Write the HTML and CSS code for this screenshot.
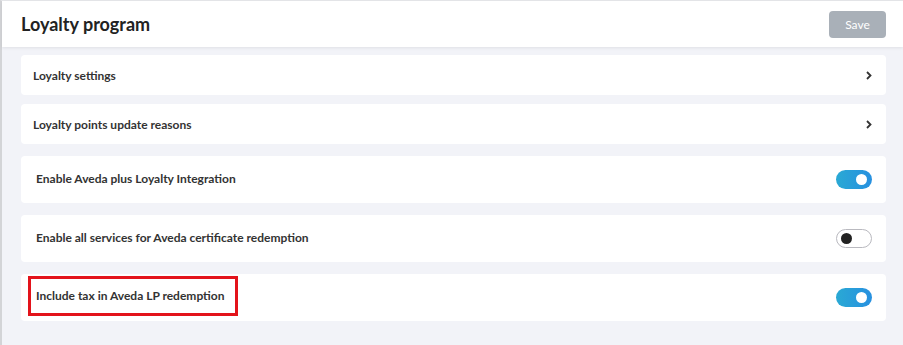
FILE: index.html
```html
<!DOCTYPE html>
<html lang="en">
<head>
    <meta charset="UTF-8">
    <meta name="viewport" content="width=device-width, initial-scale=1.0">
    <title>Loyalty program</title>
    <link rel="stylesheet" href="styles.css">
</head>
<body>
    <div class="page">
        <!-- Header -->
        <div class="header">
            <h1>Loyalty program</h1>
            <button class="save-button" disabled>Save</button>
        </div>

        <div class="content">
            <div class="card link-card">
                <span class="card-title">Loyalty settings</span>
                <svg class="chevron" width="6" height="9" viewBox="0 0 6 9"><path d="M1 1 L4.5 4.5 L1 8" fill="none" stroke="#333" stroke-width="1.8"/></svg>
            </div>
            <div class="card link-card">
                <span class="card-title">Loyalty points update reasons</span>
                <svg class="chevron" width="6" height="9" viewBox="0 0 6 9"><path d="M1 1 L4.5 4.5 L1 8" fill="none" stroke="#333" stroke-width="1.8"/></svg>
            </div>
            <div class="card toggle-card">
                <span class="card-title">Enable Aveda plus Loyalty Integration</span>
                <span class="toggle on"><span class="knob"></span></span>
            </div>
            <div class="card toggle-card">
                <span class="card-title">Enable all services for Aveda certificate redemption</span>
                <span class="toggle"><span class="knob"></span></span>
            </div>
            <div class="card toggle-card">
                <span class="card-title highlighted">Include tax in Aveda LP redemption</span>
                <span class="toggle on"><span class="knob"></span></span>
            </div>
        </div>
    </div>
</body>
</html>
```

FILE: styles.css
```css
body {
    margin: 0;
    background-color: #f2f3f8;
    font-family: Lato, "Noto Sans", sans-serif;
    color: #2b2b2b;
}

.page {
    height: 345px;
    border-left: 2px solid #d3d4d7;
    border-top: 1px solid #e6e7ea;
    box-sizing: border-box;
}

/* Header styles */
.header {
    display: flex;
    justify-content: space-between;
    align-items: center;
    height: 46px;
    padding: 0 17px 0 19px;
    background-color: #ffffff;
    box-shadow: 0 1px 3px rgba(0, 0, 0, 0.08);
}

.header h1 {
    margin: 0;
    font-size: 18px;
    font-weight: 700;
    color: #222;
}

.save-button {
    width: 57px;
    height: 27px;
    background-color: #a9b0b8;
    color: #fff;
    font-family: Lato, sans-serif;
    font-size: 12px;
    border: none;
    border-radius: 4px;
}

/* Card list */
.content {
    display: flex;
    flex-direction: column;
    padding: 8px 17px 0 19px;
}

.card {
    display: flex;
    justify-content: space-between;
    align-items: center;
    background-color: #ffffff;
    border-radius: 4px;
    font-size: 12px;
    font-weight: 700;
}

.link-card {
    height: 40px;
    padding: 0 14px 0 12px;
    margin-bottom: 9px;
}

.toggle-card {
    height: 47px;
    padding: 0 14px 0 15px;
    margin-bottom: 12px;
}

.link-card + .toggle-card {
    margin-top: 3px;
}

.card-title {
    color: #333;
}

.toggle-card .card-title {
    margin-bottom: 3px;
}

.highlighted {
    margin-left: -8px;
    margin-bottom: 0;
    padding: 9px 10px 10px 5px;
    border: 3px solid #e3131b;
}

/* Toggle switch */
.toggle {
    position: relative;
    width: 36px;
    height: 19px;
    border-radius: 10px;
    box-sizing: border-box;
    border: 1px solid #b9b9bf;
    background-color: #fff;
}

.toggle .knob {
    position: absolute;
    top: 3px;
    left: 4px;
    width: 11px;
    height: 11px;
    border-radius: 50%;
    background-color: #222;
}

.toggle.on {
    border: none;
    background: linear-gradient(90deg, #2aa9d4, #2790e0);
}

.toggle.on .knob {
    top: 4px;
    left: auto;
    right: 5px;
    background-color: #fff;
}
```
